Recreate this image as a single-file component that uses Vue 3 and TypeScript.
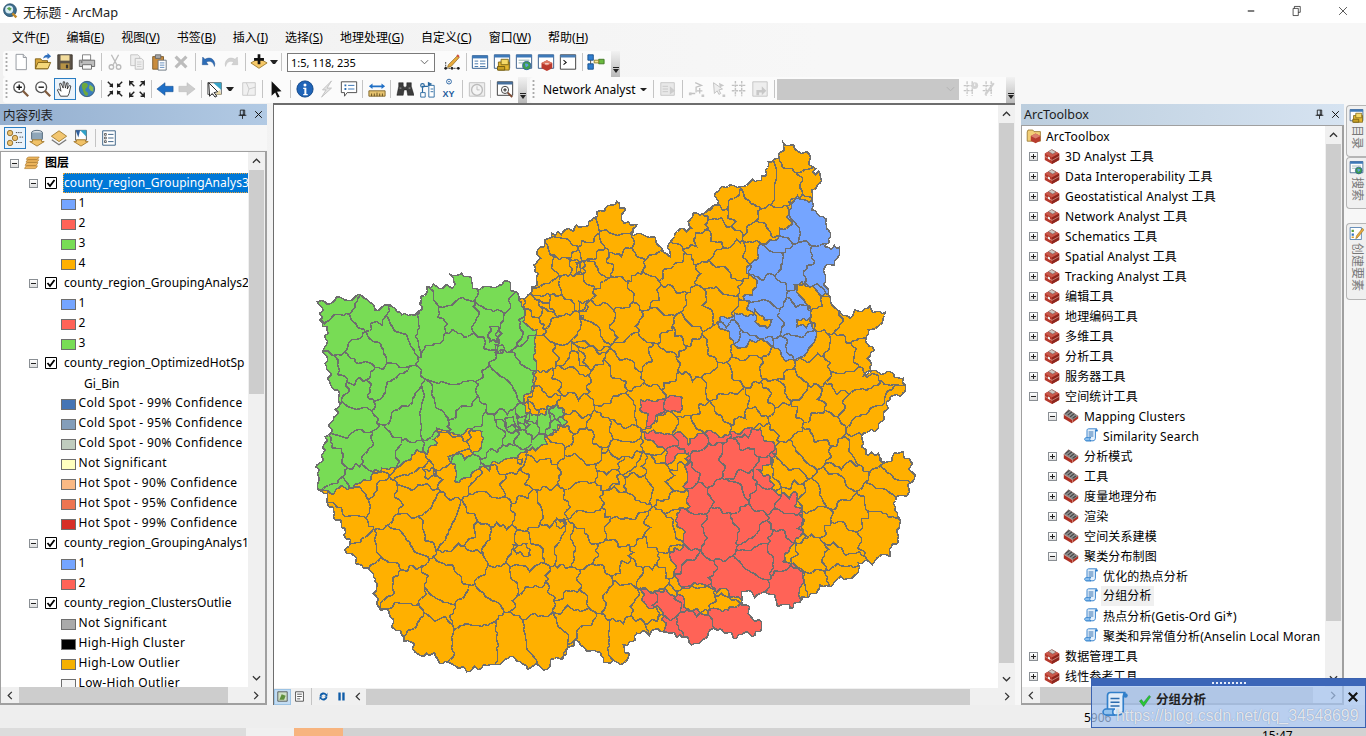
<script setup lang="ts">
type P = [number, number];
const hash = (n: number) => { const s = Math.sin(n * 127.1 + 311.7) * 43758.5453; return s - Math.floor(s); };
const conv = (ox: number, oy: number, a: number[]): P[] => { const r: P[] = []; for (let i = 0; i < a.length; i += 2) r.push([ox + a[i] / 3, oy + a[i + 1] / 3]); return r; };
const z7 = (a: number[]) => conv(310, 130, a);
const z8 = (a: number[]) => conv(620, 130, a);
const z9 = (a: number[]) => conv(310, 400, a);
const z10 = (a: number[]) => conv(620, 400, a);

function jagEdge(a: P, b: P): P[] {
  const swap = a[0] > b[0] || (a[0] === b[0] && a[1] > b[1]);
  const p = swap ? b : a; const q = swap ? a : b;
  const dx = q[0] - p[0]; const dy = q[1] - p[1]; const len = Math.hypot(dx, dy) || 1;
  const n = Math.max(1, Math.round(len / 3));
  const seed = p[0] * 13.1 + p[1] * 7.7 + q[0] * 3.3 + q[1] * 1.9;
  const w = 1 + Math.floor(hash(seed) * 3);
  const amp = Math.min(4, len / 6);
  const pts: P[] = [];
  for (let i = 0; i <= n; i++) {
    const t = i / n; const taper = Math.sin(Math.PI * t);
    const off = i === 0 || i === n ? 0 : (hash(seed + i) - 0.5) * 2.2 + taper * (Math.sin(t * Math.PI * w + seed) * amp + Math.sin(t * Math.PI * 3 * w + seed * 2) * amp * 0.35);
    const x = p[0] + dx * t - (dy / len) * off; const y = p[1] + dy * t + (dx / len) * off;
    pts.push(i === 0 || i === n ? [x, y] : [Math.round(x) + 0.5, Math.round(y) + 0.5]);
  }
  return swap ? pts.reverse() : pts;
}
function jagPath(poly: P[], close = true): string {
  let d = ''; const m = close ? poly.length : poly.length - 1;
  for (let i = 0; i < m; i++) {
    const e = jagEdge(poly[i], poly[(i + 1) % poly.length]);
    e.forEach((pt, j) => { if (j > 0 || i === 0) d += (i === 0 && j === 0 ? 'M' : 'L') + pt[0].toFixed(1) + ' ' + pt[1].toFixed(1); });
  }
  return d + (close ? 'Z' : '');
}

const ne1 = z8([490,38,535,65,560,65,578,125,600,130,600,160,575,180,575,208]);
const neBlue = z8([575,240,610,260,625,300,615,350,657,352,655,380,615,410,625,495]);
const ne3 = z8([660,545,690,565,705,540,750,528,760,548,795,547,790,565,745,600,740,640,757,650,750,710,730,738,810,725,850,745,855,785,800,815]);
const e10a = z10([790,45,770,90,730,100,725,140,745,165,775,160,785,185,850,155,885,225,865,280,830,290,825,330,835,425,770,475,715,490,700,530,625,560,600,555,590,580,545,590,545,600]);
const sRed = z10([510,625,440,580,365,575,385,640,425,675,405,705,370,700,340,715,300,685,270,690,215,735,180,705,150,700,130,695]);
const s10 = z10([100,690,50,700,45,720,10,735,25,770,10,790]);
const s9 = z9([900,790,860,755,800,720,770,750,700,810,630,785,600,770,520,795,470,815,430,795,350,760,320,760,300,725,250,685,240,650,200,605,195,545,190,520,155,495,105,450,120,430,102,405,105,385,70,350,50,300,52,280]);
const gWest = [...z9([25,270,28,235,17,200,45,150,45,110,80,45,85,0]), ...z7([60,760,45,700,45,650,50,600,30,570,35,530,22,515,70,515,80,500,105,510,155,497,185,520,195,540,225,525,245,530,275,555,335,540,335,510,350,470,370,462,425,475,435,460,418,432,455,430,505,480,520,470,570,465,590,452,625,495,625,510])];
const n7 = z7([660,490,665,470,675,470,680,440,672,405,705,330,725,310,760,305,800,285,825,290,850,265,860,245,905,225,920,213,945,240]);
const n8 = z8([5,270,50,285,30,310,70,315,120,350,150,380,165,310,215,295,205,275,220,248,240,255,260,245,300,175,330,165,405,155,440,130,445,95,475,85]);
const outline: P[] = [...ne1, ...neBlue, ...ne3, ...e10a, ...sRed, ...s10, ...s9, ...gWest, ...n7, ...n8];
const green: P[] = [...gWest, ...z7([645,540,640,575,680,600,680,720,670,735,665,770,635,820]), ...z9([665,45,740,15,772,65,730,90,690,140,650,150,600,175,555,185,500,210,460,235,435,245,435,205,415,170,430,165,480,168,515,130,515,95,380,85,378,135,305,165,300,180,215,205,160,240,120,265])];
const blue: P[] = [ne1[ne1.length - 1], ...neBlue, ...z8([595,490,545,455,525,465,570,530,575,560,530,570,530,590,575,580,590,605,525,695,455,650,440,635,390,630,355,655,330,625,290,578,345,550,400,555,370,500,410,470,405,445,380,430,415,350,450,330,470,330,480,295,515,285,505,215])];
const red: P[] = [...z10([545,600]), ...sRed, ...z10([130,640,65,600,62,565,100,580,135,565,155,585,190,590,190,620,240,640,280,625,325,630,365,605,355,590,265,560,240,550,190,565,165,530,150,455,190,440,170,340,210,320,190,260,195,200,205,160,140,195,125,140,85,120,62,93,100,90,185,100,205,135,235,100,315,105,380,85,420,85,470,155,445,195,415,210,450,230,460,270,480,285,530,280,545,350,550,390,525,425,495,460,490,485,520,490,548,520])];
const red2: P[] = z10([62,0,186,-8,185,30,140,35,100,70,80,85]);

const inside = (pt: P, poly: P[]) => { let c = false; for (let i = 0, j = poly.length - 1; i < poly.length; j = i++) { const a = poly[i]; const b = poly[j]; if ((a[1] > pt[1]) !== (b[1] > pt[1]) && pt[0] < ((b[0] - a[0]) * (pt[1] - a[1])) / (b[1] - a[1]) + a[0]) c = !c; } return c; };
const seeds: P[] = [];
let k = 0;
for (let y = 140; y < 680; y += 26) for (let x = 315 + ((y / 26) % 2) * 13; x < 920; x += 28) {
  k++; const s: P = [x + (hash(k) - 0.5) * 26, y + (hash(k + 500) - 0.5) * 24];
  const sparse = s[0] < 530 || inside(s, red) || inside(s, blue) || s[1] > 590;
  if (inside(s, outline) && hash(k + 900) > (sparse ? 0.3 : 0.14)) seeds.push(s);
}
[[575,350],[518,420],[555,418],[625,470],[578,262],[545,305]].forEach((c, i) => { for (let j = 0; j < 5; j++) { seeds.push([c[0] + (hash(i * 9 + j) - 0.5) * 24, c[1] + (hash(i * 17 + j + 40) - 0.5) * 22]); } });

function voronoiLines(): string {
  const seen = new Set<string>(); let d = '';
  seeds.forEach((s, i) => {
    let poly: P[] = [[300, 130], [930, 130], [930, 690], [300, 690]];
    seeds.forEach((o, j) => {
      if (i === j || Math.hypot(o[0] - s[0], o[1] - s[1]) > 170) return;
      const a = o[0] - s[0]; const b = o[1] - s[1]; const c = (o[0] * o[0] + o[1] * o[1] - s[0] * s[0] - s[1] * s[1]) / 2;
      const out: P[] = [];
      for (let m = 0; m < poly.length; m++) {
        const p = poly[m]; const q = poly[(m + 1) % poly.length];
        const fp = a * p[0] + b * p[1] - c; const fq = a * q[0] + b * q[1] - c;
        if (fp <= 0) out.push(p);
        if ((fp < 0 && fq > 0) || (fp > 0 && fq < 0)) { const t = fp / (fp - fq); out.push([p[0] + (q[0] - p[0]) * t, p[1] + (q[1] - p[1]) * t]); }
      }
      poly = out;
    });
    const r = poly.map((p) => [Math.round(p[0] * 10) / 10, Math.round(p[1] * 10) / 10] as P);
    r.forEach((p, m) => {
      const q = r[(m + 1) % r.length]; const key = [p.join(), q.join()].sort().join('|');
      if (seen.has(key) || (p[0] === q[0] && p[1] === q[1])) return; seen.add(key);
      d += jagPath([p, q], false);
    });
  });
  return d;
}
const extras = [z7([798,398,822,396,826,428,800,430]), z7([808,515,832,512,832,538,808,540]), z7([808,556,820,556,820,566,808,566]), z9([340,208,372,208,378,228,345,232]), z9([740,355,762,355,762,378,740,378]), z9([622,178,636,178,636,188,622,188]), z7([540,590,565,590,565,635,540,635]), z7([556,645,578,645,578,668,556,668]), z9([585,55,610,50,625,90,595,95]), z9([620,50,650,45,645,90,625,92]), z9([610,435,650,432,660,465,620,462])];
const map = {
  outline: jagPath(outline), green: jagPath(green), blue: jagPath(blue), red: jagPath(red), red2: jagPath(red2),
  hole1: jagPath(z8([405,540,455,570,440,595,405,575])),
  lines: voronoiLines() + extras.map((e) => jagPath(e)).join(''),
};

const menus = [['文件', 'F'], ['编辑', 'E'], ['视图', 'V'], ['书签', 'B'], ['插入', 'I'], ['选择', 'S'], ['地理处理', 'G'], ['自定义', 'C'], ['窗口', 'W'], ['帮助', 'H']];

const icons: Record<string, string> = {
  new: '<path d="M4.5 1.5h8l3.5 3.5v13.5H4.5z" fill="#fff" stroke="#8d9299"/><path d="M12.5 1.5v3.5H16" fill="#e6e8ea" stroke="#8d9299"/>',
  open: '<path d="M1.5 6.5h6l1.5 2h6v9h-13.5z" fill="#d9a83c" stroke="#7a5c14"/><path d="M1.5 17.5l3-7h14l-3 7z" fill="#f4d77a" stroke="#7a5c14"/><path d="M10 6c1-3 3-4 5-4V0l4 3.5-4 3.500V5c-2 0-3 0-5 1z" fill="#2f6fbd"/>',
  save: '<path d="M2 2h16v16H2z" fill="#5c5348" stroke="#3d372e"/><path d="M5 2.500h10v6H5z" fill="#f2dc9c"/><path d="M5 11.500h10V18H5z" fill="#b79345"/><path d="M11 13h2.500v4H11z" fill="#3d372e"/>',
  print: '<path d="M5 2h9v6H5z" fill="#fff" stroke="#7b7b7b"/><path d="M1.500 8h17v7h-17z" fill="#bdbdbd" stroke="#666"/><path d="M5 13h10v5H5z" fill="#f8f8f8" stroke="#666"/><path d="M3 10h2" stroke="#333"/>',
  cut: '<path d="M6 2l6 11M14 2L8 13" stroke="#bbb" stroke-width="1.500" fill="none"/><circle cx="6" cy="15.500" r="2.500" fill="none" stroke="#bbb" stroke-width="1.500"/><circle cx="14" cy="15.500" r="2.500" fill="none" stroke="#bbb" stroke-width="1.500"/>',
  copy: '<path d="M3 2h8l2 2v10H3z" fill="#eee" stroke="#c2c2c2"/><path d="M8 6h7l2 2v10H8z" fill="#f0f0f0" stroke="#bdbdbd"/><path d="M10 10h5M10 12.500h5M10 15h5" stroke="#ccc"/>',
  paste: '<path d="M3 4h12v14H3z" fill="#c98c3d" stroke="#7b5a2a"/><path d="M6 2h6v4H6z" fill="#a8a8a8" stroke="#666"/><path d="M9 8h9v11H9z" fill="#fff" stroke="#66707a"/><path d="M11 11h5M11 13.500h5M11 16h5" stroke="#5b86b8"/>',
  del: '<path d="M4 4l12 12M16 4L4 16" stroke="#bcbcbc" stroke-width="3.500"/>',
  undo: '<path d="M5.500 7c5-3 10-1 11 5l-.5 3c-1-5-5-7-9-5l2 3H2.500L3 4.500z" fill="#2c6cb7" stroke="#1d4d89" stroke-width=".5"/>',
  redo: '<path d="M14.500 7c-5-3-10-1-11 5l.5 3c1-5 5-7 9-5l-2 3h6.500L17 4.500z" fill="#d2d2d2" stroke="#bbb" stroke-width=".5"/>',
  add: '<path d="M10 6l9 5-9 6-9-6z" fill="#f6c867" stroke="#9b7a2e"/><path d="M8.500 1.500h3v4h4v3h-4v4h-3v-4h-4v-3h4z" fill="#111"/>',
  editor: '<circle cx="3" cy="17" r="1.500" fill="#111"/><circle cx="10" cy="17" r="1.500" fill="#111"/><circle cx="17" cy="17" r="1.500" fill="#111"/><path d="M3 17h14M3 10v7" stroke="#333" stroke-dasharray="2 1"/><path d="M6 13l10-10 2 2-9 10-4 1z" fill="#e8a93b" stroke="#7a5c14" stroke-width=".7"/><path d="M15 3l1.500-1.500 2 2L17 5z" fill="#cf4d3d"/>',
  table: '<path d="M1.500 3h17v14h-17z" fill="#fff" stroke="#1f4f87"/><path d="M1.500 3h17v3h-17z" fill="#3c78b8"/><path d="M4 9h4M10 9h6M4 12h4M10 12h6M4 15h4M10 15h6" stroke="#3a6ea5"/>',
  catalog: '<path d="M1.500 2h17v15h-17z" fill="#fff" stroke="#2b5282"/><path d="M1.500 2h17v3h-17z" fill="#3c78b8"/><path d="M6 10h12v9H6z" fill="#e3b62f" stroke="#7b6415"/><path d="M9 7h8v6H9z" fill="#f5d968" stroke="#7b6415"/><path d="M5 15h8v4H5z" fill="#c9a024" stroke="#6e5a12"/>',
  search: '<path d="M1.500 2h17v15h-17z" fill="#fff" stroke="#2b5282"/><path d="M1.500 2h17v3h-17z" fill="#3c78b8"/><path d="M4 8h12M4 11h6" stroke="#8aa"/><circle cx="13" cy="14" r="4.500" fill="#3f9e49" stroke="#2a5e9b"/><path d="M11 12c2-1 4 0 4 2l-3 2z" fill="#5d9ee0"/>',
  boxwin: '<path d="M1.500 2h17v15h-17z" fill="#fff" stroke="#2b5282"/><path d="M1.500 2h17v3h-17z" fill="#3c78b8"/><path d="M5 11l6-3 6 3v6l-6 3-6-3z" fill="#bb3a2e"/><path d="M5 11l6-3 6 3-6 3z" fill="#de7b66"/><path d="M9 12h4" stroke="#fff"/>',
  cmd: '<path d="M1.500 2h17v16h-17z" fill="#fff" stroke="#333"/><path d="M1.500 2h17v3h-17z" fill="#4a7eb5"/><path d="M5 8l3 2.500L5 13" fill="none" stroke="#111" stroke-width="1.200"/>',
  model: '<path d="M1 2h6v6H1zM1 12h6v6H1z" fill="#2f7ed0" stroke="#174f8a"/><path d="M13 7h6v5h-6z" fill="#69b93f" stroke="#3f7622"/><path d="M8 8h5v3H8z" fill="#f5e89a" stroke="#8c7a26"/><path d="M4 8v4" stroke="#444"/>',
  zin: '<circle cx="8" cy="8" r="6" fill="#fff" stroke="#555" stroke-width="1.500"/><path d="M5 8h6M8 5v6" stroke="#111" stroke-width="1.500"/><path d="M12 12l6 6" stroke="#7f5a3c" stroke-width="2.500"/>',
  zout: '<circle cx="8" cy="8" r="6" fill="#fff" stroke="#555" stroke-width="1.500"/><path d="M5 8h6" stroke="#111" stroke-width="1.500"/><path d="M12 12l6 6" stroke="#7f5a3c" stroke-width="2.500"/>',
  pan: '<path d="M5 18l-3.500-7 1.500-1 2.500 2.500L4 4l1.500-.5L8 9V2h1.500l1 7 1.500-6 1.500.5-1 6.500 2.500-4 1.500.7-2 8.300-1.500 3z" fill="#fff" stroke="#222" stroke-width=".9"/>',
  globe: '<circle cx="10" cy="10" r="8.500" fill="#3b7fbe" stroke="#365a78"/><path d="M5 4c3-2 6 0 6 2s-3 3-3 5 4 2 3 5-4 1-5-3-3-6-1-9z" fill="#6ea93d"/><path d="M13 5l4 3 0 5-3-1-2-3z" fill="#8cbd4d"/>',
  fixin: '<path d="M2 2l5 5V4M7 7H4M18 2l-5 5V4M13 7h3M2 18l5-5v3M7 13H4M18 18l-5-5v3M13 13h3" fill="none" stroke="#222" stroke-width="1.600"/>',
  fixout: '<path d="M7 7L2 2v4M2 2h4M13 7l5-5v4M18 2h-4M7 13l-5 5v-4M2 18h4M13 13l5 5v-4M18 18h-4" fill="none" stroke="#222" stroke-width="1.600"/>',
  back: '<path d="M1 10l9-7v4h9v6h-9v4z" fill="#1f6fc6" stroke="#124a8b" stroke-width=".6"/>',
  fwd: '<path d="M19 10l-9-7v4H1v6h9v4z" fill="#cdcdcd" stroke="#bbb" stroke-width=".6"/>',
  selmap: '<path d="M2 3h15v13H2z" fill="#fff" stroke="#555"/><path d="M8 3l9 0v8z" fill="#38a3c7"/><path d="M10 16l5-5 2 5z" fill="#e6d6a2"/><path d="M3 3l1 15 3-3 3 4 2-1-3-4 4-1z" fill="#fff" stroke="#111"/>',
  clear: '<path d="M3 3h14v14H3z" fill="#f0f0f0" stroke="#c8c8c8"/><path d="M7 3l3 7 7-2M10 10l-2 7" fill="none" stroke="#c8c8c8"/>',
  arrow: '<path d="M4 1.500l11 11-5 .5 3 5.500-2.500 1L8 14l-4 3.500z" fill="#111"/>',
  info: '<circle cx="10" cy="10" r="9" fill="#1f64b8" stroke="#0e4484"/><circle cx="10" cy="5.500" r="1.700" fill="#fff"/><path d="M8 8.500h3.500v7H13V17H8v-1.500h1.300V10H8z" fill="#fff"/>',
  flash: '<path d="M15 1L5 11h4l-5 8 11-10h-5l5-8z" fill="#e4e4e4" stroke="#c0c0c0"/>',
  popup: '<path d="M1.500 2h17v12H8l-3 4v-4H1.500z" fill="#fff" stroke="#444"/><path d="M5 5h2v2H5zM5 9h2v2H5z" fill="#2b6cb0"/><path d="M9 6h7M9 10h7" stroke="#2b6cb0"/>',
  measure: '<path d="M1 12h18v6H1z" fill="#e7c470" stroke="#7d6328"/><path d="M4 15v3M7 15v3M10 14v4M13 15v3M16 15v3" stroke="#5e4a1c"/><path d="M1 7l4-3v2h10V4l4 3-4 3V8H5v2z" fill="#1f6fc6"/>',
  binoc: '<path d="M3 3h5v3l1 2h2l1-2V3h5v4l3 10h-7l-1-6H9l-1 6H1l2-10z" fill="#3d3d3d" stroke="#111" stroke-width=".5"/><path d="M4 9h2M14 9h2" stroke="#aaa"/>',
  route: '<path d="M3 14h5v5H3zM12 6h6v13h-6z" fill="#fff" stroke="#28689f"/><path d="M5 14V7h6M3 6a2 2 0 104 0 2 2 0 10-4 0" fill="none" stroke="#28689f" stroke-width="1.300"/><path d="M11 2l5 2.500L11 7z" fill="#28689f"/><path d="M14 10h3M14 13h3" stroke="#28689f"/>',
  xy: '<circle cx="10" cy="6" r="4" fill="#fff" stroke="#1f5c9e" stroke-width="1.500"/><circle cx="10" cy="6" r="1.300" fill="#1f5c9e"/>',
  time: '<path d="M1.500 3h17v15h-17z" fill="#eee" stroke="#c0c0c0"/><circle cx="10" cy="11" r="6" fill="#f5f5f5" stroke="#bbb" stroke-width="1.500"/><path d="M10 7v4h3" stroke="#bbb" fill="none"/>',
  viewer: '<path d="M1.500 2h17v15h-17z" fill="#fff" stroke="#333"/><path d="M1.500 2h17v3h-17z" fill="#456f9c"/><circle cx="10" cy="11" r="4" fill="#fff" stroke="#333"/><path d="M8 11h4M10 9v4" stroke="#111"/><path d="M13 14l5 5" stroke="#7f4a33" stroke-width="2.200"/>',
  na1: '<path d="M2 3h15v14H2z" fill="#e8e8e8" stroke="#c6c6c6"/><path d="M4 7h6M4 10h6M4 13h6" stroke="#c6c6c6"/><path d="M12 7l6 5-6 4z" fill="#ccc"/>',
  na2: '<path d="M8 3l7 3-6 2v6M2 15h6M10 12h6M13 9v6" fill="none" stroke="#c2c2c2" stroke-width="1.400"/><path d="M1 14h3v3H1zM15 16h3v3h-3z" fill="#c8c8c8"/>',
  na3: '<path d="M5 3l1 12 3-3 2 4 2-1-2-4 4-1z" fill="#eee" stroke="#c0c0c0"/><path d="M11 3l6 3-5 2zM15 16h3v3h-3z" fill="#c8c8c8"/>',
  na4: '<path d="M2 6h16M2 12h16M6 1v17M13 1v17" stroke="#c2c2c2" stroke-width="1.600" fill="none" stroke-dasharray="3 1"/>',
  na5: '<path d="M2 2h16v16H2z" fill="#eee" stroke="#c4c4c4"/><path d="M6 17v-6h6V7l5 5-5 5v-3H9v3z" fill="#c8c8c8"/>',
  na6: '<path d="M2 6h12M2 12h12M6 1v17M12 1v17" stroke="#c6c6c6" stroke-width="1.500" stroke-dasharray="3 1"/><circle cx="15" cy="6" r="4" fill="#d4d4d4"/><path d="M14.500 3.500h1v3h-1z" fill="#fff"/>',
  na7: '<path d="M2 6h12M2 12h12M6 1v17M12 1v17" stroke="#c6c6c6" stroke-width="1.500" stroke-dasharray="3 1"/><path d="M15 3l-10 14" stroke="#cfcfcf" stroke-width="2.500"/>',
  tocA: '<circle cx="4.500" cy="4.500" r="3" fill="#ecc16e" stroke="#8d6c2a"/><circle cx="10" cy="10" r="3" fill="#ecc16e" stroke="#8d6c2a"/><circle cx="4.500" cy="15.500" r="3" fill="#ecc16e" stroke="#8d6c2a"/><path d="M11 4h7M15 9h4M11 15h7" stroke="#333" stroke-dasharray="1.500 1"/>',
  tocB: '<ellipse cx="10" cy="4" rx="6" ry="2.500" fill="#dbe2e8" stroke="#4e6375"/><path d="M4 4v7c0 3 12 3 12 0V4" fill="#8fa6b8" stroke="#4e6375"/><path d="M5 12h10v2h3l-8 5-8-5h3z" fill="#f1c268" stroke="#a3782b"/>',
  tocC: '<path d="M10 2l8.500 6-8.500 6-8.500-6z" fill="#f2c670" stroke="#a17c30"/><path d="M2 12l8 5.500 8-5.500" fill="none" stroke="#7a7a7a" stroke-width="1.500"/>',
  tocD: '<path d="M4 1.500h12v11H4z" fill="#fff" stroke="#555"/><path d="M9 1.500h7v7z" fill="#30a2c8"/><path d="M4 1.500l5 0-2 8z" fill="#2f5f9d"/><path d="M5 12h10v2h3l-8 5-8-5h3z" fill="#f1c268" stroke="#a3782b"/>',
  tocE: '<path d="M3 2h14v16H3z" fill="#fff" stroke="#31597f"/><path d="M5 5h2v2H5zM5 9h2v2H5zM5 13h2v2H5z" fill="none" stroke="#333" stroke-width=".8"/><path d="M9 6h6M9 10h6M9 14h6" stroke="#31597f"/>',
  layers: '<path d="M3 5.500q.5-2.500 3-3h13q-1 2.500-3 3zM2.500 9q.5-2.500 3-3h13q-1 2.500-3 3zM1.500 13q.5-3 3-3.500h13q-1 3-3 3.500zM.8 17q.5-3 3-3.500h13q-1 3-3 3.500z" fill="#f0b860" stroke="#a87425" stroke-width=".8"/>',
  pin: '<path d="M6 2h8v9H6z" fill="none" stroke="#111" stroke-width="1.500"/><path d="M11.500 2v9" stroke="#111" stroke-width="1.500"/><path d="M3 11.500h14M10 12v6" stroke="#111" stroke-width="1.500"/>',
  close: '<path d="M4 4l12 12M16 4L4 16" stroke="#111" stroke-width="1.800"/>',
  folderbox: '<path d="M1.500 5l1-2.500h6l1.500 2h8v12h-16.500z" fill="#f2cf77" stroke="#94722b"/><path d="M6 10l6-3 6 3v6l-6 3-6-3z" fill="#b73c2e"/><path d="M6 10l6-3 6 3-6 3z" fill="#db7f6c"/>',
  box: '<path d="M1 7l9-5 9 5v8l-9 5-9-5z" fill="#b5382b"/><path d="M1 7l9-5 9 5-9 5z" fill="#c9584a"/><path d="M10 12l9-5v8l-9 5z" fill="#8f271e"/><path d="M5.500 4.500L9.500 2l5.500 3-4 2.500z" fill="#cfc9c5" stroke="#6e5d58" stroke-width=".6"/><path d="M1 10.500l9 5 9-5" fill="none" stroke="#e8b6a8" stroke-width=".8"/><path d="M5 10.500l2.500 1.300v3L5 13.500z" fill="#f2f2f2"/>',
  set: '<path d="M1 8l6-6 12 8v3l-8 6-10-6z" fill="#ad2f23"/><path d="M1 8l6-6 12 8-7 5z" fill="#8c8c8c"/><path d="M3 7l5-4M6 9l5-4M9 11l5-4M12 13l4-3" stroke="#3f3f3f" stroke-width="1.300"/><path d="M1 8l11 7v4" fill="none" stroke="#e1bdb2" stroke-width=".7"/>',
  script: '<path d="M5 3c0-1.500 1-2 2-2h10c-1 .5-1.500 1.500-1.500 2.500V13c0 1-1 3-3 3H4c1.500-.5 1-3 1-4z" fill="#e6f1fc" stroke="#2478c8" stroke-width="1.100"/><path d="M7 5h6M7 7.500h6M7 10h6" stroke="#1c62a8" stroke-width="1.100"/><path d="M2 14c0-1 1-2 2-2h6c-1 0-1.500 1-1.500 2s.5 2 1.500 2H4c-1 0-2-1-2-2z" fill="#8fc2f0" stroke="#2478c8"/><circle cx="17" cy="3" r="1.500" fill="#2478c8"/>',
  check: '<path d="M2 10l3-2 3 4 8-10 2 2L8 18z" fill="#28c834" stroke="#156e1f" stroke-width=".6"/>',
  mn: '<path d="M5 10h10" stroke="#000" stroke-width="1.600"/>',
  rst: '<path d="M6 6V3h9v9h-3M4 6h8v11H4z" fill="none" stroke="#000"/>',
  cls: '<path d="M4 4l12 12M16 4L4 16" stroke="#000"/>',
};

type T = { i?: string; s?: boolean; c?: boolean };
const i = (n: string): T => ({ i: n }); const S: T = { s: true }; const C: T = { c: true };
const bar1a: T[] = [i('new'), i('open'), i('save'), i('print'), S, i('cut'), i('copy'), i('paste'), i('del'), S, i('undo'), i('redo'), S, i('add'), C, S];
const bar1b: T[] = [i('editor'), S, i('table'), i('catalog'), i('search'), i('boxwin'), i('cmd'), S, i('model')];
const bar2a: T[] = [i('zin'), i('zout'), i('pan'), i('globe'), S, i('fixin'), i('fixout'), S, i('back'), i('fwd'), S, i('selmap'), C, i('clear'), S, i('arrow'), S, i('info'), i('flash'), i('popup'), S, i('measure'), S, i('binoc'), i('route'), i('xy'), S, i('time'), S, i('viewer')];
const bar2b: T[] = [S, i('na1'), S, i('na2'), i('na3'), i('na4'), i('na5'), S];

const sw = { b: '#75a5ff', r: '#ff6357', g: '#78dc55', o: '#ffb000' };
type Row = { head?: string; sel?: boolean; sub?: string; c?: string; t?: string };
const toc: Row[] = [
  { head: 'county_region_GroupingAnalys3', sel: true }, { c: sw.b, t: '1' }, { c: sw.r, t: '2' }, { c: sw.g, t: '3' }, { c: sw.o, t: '4' },
  { head: 'county_region_GroupingAnalys2' }, { c: sw.b, t: '1' }, { c: sw.r, t: '2' }, { c: sw.g, t: '3' },
  { head: 'county_region_OptimizedHotSp' }, { sub: 'Gi_Bin' },
  { c: '#4575b5', t: 'Cold Spot - 99% Confidence' }, { c: '#849eba', t: 'Cold Spot - 95% Confidence' }, { c: '#c0ccbe', t: 'Cold Spot - 90% Confidence' }, { c: '#ffffbf', t: 'Not Significant' }, { c: '#fab984', t: 'Hot Spot - 90% Confidence' }, { c: '#ed7551', t: 'Hot Spot - 95% Confidence' }, { c: '#d62f27', t: 'Hot Spot - 99% Confidence' },
  { head: 'county_region_GroupingAnalys1' }, { c: sw.b, t: '1' }, { c: sw.r, t: '2' },
  { head: 'county_region_ClustersOutlie' }, { c: '#aaaaaa', t: 'Not Significant' }, { c: '#000000', t: 'High-High Cluster' }, { c: '#f5b000', t: 'High-Low Outlier' }, { c: '#f5f5f5', t: 'Low-High Outlier' },
];
type Tb = { lv: number; t: string; ic: string; box?: string; hl?: boolean };
const tb = (t: string, box = '+'): Tb => ({ lv: 0, t, ic: 'box', box });
const ts = (t: string, box = '+'): Tb => ({ lv: 1, t, ic: 'set', box });
const sc = (t: string, hl = false): Tb => ({ lv: 2, t, ic: 'script', hl });
const tools: Tb[] = [
  tb('3D Analyst 工具'), tb('Data Interoperability 工具'), tb('Geostatistical Analyst 工具'), tb('Network Analyst 工具'), tb('Schematics 工具'), tb('Spatial Analyst 工具'), tb('Tracking Analyst 工具'), tb('编辑工具'), tb('地理编码工具'), tb('多维工具'), tb('分析工具'), tb('服务器工具'), tb('空间统计工具', '-'),
  ts('Mapping Clusters', '-'), sc('Similarity Search'), ts('分析模式'), ts('工具'), ts('度量地理分布'), ts('渲染'), ts('空间关系建模'), ts('聚类分布制图', '-'),
  sc('优化的热点分析'), sc('分组分析', true), sc('热点分析(Getis-Ord Gi*)'), sc('聚类和异常值分析(Anselin Local Moran'), tb('数据管理工具'), tb('线性参考工具'),
];
</script>

<template>
  <div class="app">
    <header class="titlebar">
      <svg class="appicon" viewBox="0 0 20 20"><circle cx="10" cy="9" r="8" fill="#3d6d8d" stroke="#234a66"/><circle cx="9" cy="8" r="5" fill="#d8ecf4"/><path d="M6 7l3-2 3 2-2 3z" fill="#5aa34a"/><path d="M13 13l5 5" stroke="#c28a2c" stroke-width="3"/></svg>
      <span class="apptitle">无标题 - ArcMap</span>
      <div class="winbtns">
        <svg class="winbtn" viewBox="0 0 20 20" v-html="icons.mn"></svg>
        <svg class="winbtn" viewBox="0 0 20 20" v-html="icons.rst"></svg>
        <svg class="winbtn" viewBox="0 0 20 20" v-html="icons.cls"></svg>
      </div>
    </header>
    <nav class="menubar">
      <span v-for="m in menus" :key="m[1]" class="menu">{{ m[0] }}(<u>{{ m[1] }}</u>)</span>
    </nav>

    <div class="toolrow r1">
      <div class="bar bar1">
        <span class="grip"></span>
        <template v-for="(b, n) in bar1a" :key="n">
          <svg v-if="b.i" class="ti" viewBox="0 0 20 20" v-html="icons[b.i]"></svg>
          <span v-else-if="b.s" class="sep"></span>
          <span v-else class="caret"></span>
        </template>
        <div class="scale"><span>1:5, 118, 235</span><svg viewBox="0 0 10 6" class="chev"><path d="M1 1l4 4 4-4" fill="none" stroke="#555"/></svg></div>
        <span class="sep s2"></span>
        <template v-for="(b, n) in bar1b" :key="n">
          <svg v-if="b.i" class="ti" viewBox="0 0 20 20" v-html="icons[b.i]"></svg>
          <span v-else class="sep"></span>
        </template>
        <span class="endgrip"><i></i></span>
      </div>
    </div>
    <div class="toolrow r2">
      <div class="bar bar2a">
        <span class="grip"></span>
        <template v-for="(b, n) in bar2a" :key="n">
          <span v-if="b.i === 'pan'" class="tiActive"><svg class="ti" viewBox="0 0 20 20" v-html="icons.pan"></svg></span>
          <span v-else-if="b.i === 'xy'" class="xy"><svg viewBox="0 0 20 20" v-html="icons.xy"></svg><b>XY</b></span>
          <svg v-else-if="b.i" class="ti" viewBox="0 0 20 20" v-html="icons[b.i]"></svg>
          <span v-else-if="b.s" class="sep"></span>
          <span v-else class="caret"></span>
        </template>
        <span class="endgrip"><i></i></span>
      </div>
      <div class="bar bar2b">
        <span class="grip"></span>
        <span class="na">Network Analyst</span>
        <span class="caret tiny"></span>
        <template v-for="(b, n) in bar2b" :key="n">
          <svg v-if="b.i" class="ti" viewBox="0 0 20 20" v-html="icons[b.i]"></svg>
          <span v-else class="sep"></span>
        </template>
        <div class="combo"><svg viewBox="0 0 10 6" class="chev"><path d="M1 1l4 4 4-4" fill="none" stroke="#b0b0b0"/></svg></div>
        <svg class="ti nar first" viewBox="0 0 20 20" v-html="icons.na6"></svg>
        <svg class="ti nar" viewBox="0 0 20 20" v-html="icons.na7"></svg>
        <span class="endgrip"><i></i></span>
      </div>
    </div>

    <main class="work">
      <section class="toc">
        <div class="ptitle tocT"><span>内容列表</span><svg viewBox="0 0 20 20" v-html="icons.pin"></svg><svg viewBox="0 0 20 20" v-html="icons.close"></svg></div>
        <div class="tocbar">
          <span class="tiActive small"><svg class="ti" viewBox="0 0 20 20" v-html="icons.tocA"></svg></span>
          <svg class="ti" viewBox="0 0 20 20" v-html="icons.tocB"></svg>
          <svg class="ti" viewBox="0 0 20 20" v-html="icons.tocC"></svg>
          <svg class="ti" viewBox="0 0 20 20" v-html="icons.tocD"></svg>
          <span class="sep"></span>
          <svg class="ti" viewBox="0 0 20 20" v-html="icons.tocE"></svg>
        </div>
        <div class="frame tocframe">
          <div class="treewrap">
            <div class="tree toctree">
              <div class="row rootrow">
                <span class="exp e1"></span>
                <svg class="rowic" viewBox="0 0 20 20" v-html="icons.layers"></svg>
                <b>图层</b>
              </div>
              <template v-for="(r, n) in toc" :key="n">
                <div v-if="r.head" class="row head">
                  <span class="exp"></span>
                  <svg class="cb" viewBox="0 0 12 12"><path d="M.5.5h11v11H.5z" fill="#fff" stroke="#000"/><path d="M2.500 6l2.500 3 4.500-6" fill="none" stroke="#000" stroke-width="1.800"/></svg>
                  <span class="lbl" :class="{ selected: r.sel }">{{ r.head }}</span>
                </div>
                <div v-else-if="r.sub" class="row subhd">{{ r.sub }}</div>
                <div v-else class="row leg"><i class="sw" :style="{ background: r.c }"></i><span>{{ r.t }}</span></div>
              </template>
            </div>
            <div class="vbar">
              <svg class="arr" viewBox="0 0 10 6"><path d="M1 5l4-4 4 4" fill="none" stroke="#333" stroke-width="1.400"/></svg>
              <div class="vtrack"><div class="thumb tocv"></div></div>
              <svg class="arr" viewBox="0 0 10 6"><path d="M1 1l4 4 4-4" fill="none" stroke="#333" stroke-width="1.400"/></svg>
            </div>
          </div>
          <div class="hbar">
            <svg class="arrh" viewBox="0 0 6 10"><path d="M5 1L1 5l4 4" fill="none" stroke="#333" stroke-width="1.400"/></svg>
            <div class="htrack"><div class="thumbh toch"></div></div>
            <svg class="arrh" viewBox="0 0 6 10"><path d="M1 1l4 4-4 4" fill="none" stroke="#333" stroke-width="1.400"/></svg>
          </div>
        </div>
      </section>

      <section class="mapp">
        <div class="mapinner">
          <svg class="mapsvg" viewBox="274 105 724 583" shape-rendering="crispEdges">
            <defs><clipPath id="mclip"><path :d="map.outline"/></clipPath></defs>
            <path :d="map.outline" fill="#ffb000"/>
            <path :d="map.green" fill="#78dc55"/>
            <path :d="map.blue" fill="#75a5ff"/>
            <path :d="map.red" fill="#ff6357"/>
            <path :d="map.red2" fill="#ff6357"/>
            <path :d="map.hole1" fill="#ffb000"/>
            <path :d="map.lines" fill="none" stroke="#6e6e6e" stroke-width="1.600" clip-path="url(#mclip)"/>
            <path :d="map.green + map.blue + map.red + map.red2 + map.hole1" fill="none" stroke="#6e6e6e" stroke-width="1.600" clip-path="url(#mclip)"/>
            <path :d="map.outline" fill="none" stroke="#6e6e6e" stroke-width="1.600"/>
          </svg>
          <div class="vbar mapv">
            <svg class="arr" viewBox="0 0 10 6"><path d="M1 5l4-4 4 4" fill="none" stroke="#333" stroke-width="1.400"/></svg>
            <div class="vtrack"><div class="thumb mapthumb"></div></div>
            <svg class="arr" viewBox="0 0 10 6"><path d="M1 1l4 4 4-4" fill="none" stroke="#333" stroke-width="1.400"/></svg>
          </div>
        </div>
        <div class="mapbottom">
          <span class="mb active"><svg viewBox="0 0 14 14"><path d="M1 1h12v12H1z" fill="#cfe0c6" stroke="#444"/><path d="M3 11l3-7 5 2-2 5z" fill="#5f8f3c"/></svg></span>
          <span class="mb"><svg viewBox="0 0 14 14"><path d="M2 1h10v12H2z" fill="#fff" stroke="#333"/><path d="M4 4h6M4 7h6M4 10h4" stroke="#333"/></svg></span>
          <span class="sep"></span>
          <span class="mb"><svg viewBox="0 0 14 14"><path d="M2 6a5 5 0 019-2l1-2v5H8l2-1.500A3.500 3.500 0 004 7zM12 8a5 5 0 01-9 2l-1 2V7h4L4 8.500A3.500 3.500 0 0010 7z" fill="#0f5ca8"/></svg></span>
          <span class="mb"><svg viewBox="0 0 14 14"><path d="M3 2h3v10H3zM8 2h3v10H8z" fill="#0f5ca8"/></svg></span>
          <svg class="arrh" viewBox="0 0 6 10"><path d="M5 1L1 5l4 4" fill="none" stroke="#333" stroke-width="1.400"/></svg>
          <div class="htrack"><div class="thumbh mapth"></div></div>
          <svg class="arrh" viewBox="0 0 6 10"><path d="M1 1l4 4-4 4" fill="none" stroke="#333" stroke-width="1.400"/></svg>
        </div>
      </section>

      <section class="toolbox">
        <div class="ptitle tbT"><span>ArcToolbox</span><svg viewBox="0 0 20 20" v-html="icons.pin"></svg><svg viewBox="0 0 20 20" v-html="icons.close"></svg></div>
        <div class="frame tbframe">
          <div class="treewrap">
            <div class="tree tbtree">
              <div class="row tbrow root"><svg class="rowic" viewBox="0 0 20 20" v-html="icons.folderbox"></svg><span>ArcToolbox</span></div>
              <div v-for="(r, n) in tools" :key="n" class="row tbrow" :class="'lv' + r.lv">
                <span v-if="r.box" class="exp" :class="{ plus: r.box === '+' }"></span>
                <svg class="rowic" viewBox="0 0 20 20" v-html="icons[r.ic]"></svg>
                <span :class="{ hl: r.hl }">{{ r.t }}</span>
              </div>
            </div>
            <div class="vbar">
              <svg class="arr" viewBox="0 0 10 6"><path d="M1 5l4-4 4 4" fill="none" stroke="#333" stroke-width="1.400"/></svg>
              <div class="vtrack"><div class="thumb tbv"></div></div>
              <svg class="arr" viewBox="0 0 10 6"><path d="M1 1l4 4 4-4" fill="none" stroke="#333" stroke-width="1.400"/></svg>
            </div>
          </div>
          <div class="hbar">
            <svg class="arrh" viewBox="0 0 6 10"><path d="M5 1L1 5l4 4" fill="none" stroke="#333" stroke-width="1.400"/></svg>
            <div class="htrack"><div class="thumbh tbh"></div></div>
            <svg class="arrh" viewBox="0 0 6 10"><path d="M1 1l4 4-4 4" fill="none" stroke="#333" stroke-width="1.400"/></svg>
          </div>
        </div>
      </section>

      <aside class="dock">
        <div class="dtab t1"><svg viewBox="0 0 20 20" v-html="icons.catalog"></svg><span>目录</span></div>
        <div class="dtab t2"><svg viewBox="0 0 20 20" v-html="icons.search"></svg><span>搜索</span></div>
        <div class="dtab t3"><svg viewBox="0 0 20 20"><path d="M1.500 2h15v16h-15z" fill="#fff" stroke="#3a6ea5"/><path d="M3.500 5h3v3h-3z" fill="#5a9e3d"/><path d="M3.500 10h3v3h-3z" fill="#2e74c4"/><path d="M3.500 14h3v2h-3z" fill="#d9a032"/><path d="M9 17l1-4 8-10 2 2-8 10z" fill="#e8a93b" stroke="#7a5c14" stroke-width=".6"/></svg><span>创建要素</span></div>
      </aside>
    </main>

    <footer class="status"><span>5906</span></footer>
    <div class="taskbar"><i class="tk a"></i><i class="tk b"></i><i class="tk c"></i><i class="tk d"></i><span class="clock">15:47</span></div>

    <div class="popup">
      <div class="ptop"><i v-for="n in 9" :key="n"></i></div>
      <div class="pbody">
        <svg class="pscroll" viewBox="0 0 20 20" v-html="icons.script"></svg>
        <svg class="pcheck" viewBox="0 0 20 20" v-html="icons.check"></svg>
        <b>分组分析</b>
        <svg class="pclose" viewBox="0 0 20 20"><path d="M4 4l12 12M16 4L4 16" stroke="#111" stroke-width="3"/></svg>
      </div>
      <span class="wm">https://blog.csdn.net/qq_34548699</span>
    </div>
  </div>
</template>

<style scoped>
.app { width: 1366px; height: 736px; overflow: hidden; position: relative; display: flex; flex-direction: column; background: linear-gradient(90deg, #f0f0f0, #f7f7f7 60%); font-family: "Noto Sans", "Noto Sans CJK SC", sans-serif; font-size: 12px; color: #000; }
svg { display: block; flex: none; }
.titlebar { height: 23px; flex: none; background: #fff; display: flex; align-items: center; padding: 0 0 1px 2px; box-sizing: border-box; }
.appicon { width: 16px; height: 16px; margin-right: 5px; }
.apptitle { font-size: 12.8px; color: #222; }
.winbtns { margin-left: auto; display: flex; padding-right: 18px; gap: 36px; }
.winbtn { width: 10px; height: 10px; transform: scale(1.300); }
.menubar { height: 24px; flex: none; display: flex; align-items: center; gap: 17px; padding: 4px 0 0 12px; box-sizing: border-box; }
.menu { white-space: nowrap; font-size: 12px; }
.toolrow { display: flex; height: 26px; flex: none; padding-left: 3px; }
.r1 { margin-top: 4px; }
.bar { display: flex; align-items: center; background: #fbfbfb; height: 26px; box-sizing: border-box; border-radius: 3px 0 0 3px; position: relative; }
.r1 .bar { padding-bottom: 4px; }
.r2 .bar { padding-bottom: 2px; }
.grip { width: 7px; flex: none; height: 18px; background-image: radial-gradient(circle, #aaa 1px, transparent 1.200px); background-size: 3px 4px; background-position: center; background-repeat: repeat-y; }
.bar1 { width: 617px; }
.bar2a { width: 524px; }
.bar2b { width: 485px; margin-left: 3px; }
.ti { width: 18px; height: 18px; margin: 0 2px; }
.sep { width: 1px; height: 18px; background: #c4c4c4; margin: 0 2.500px; flex: none; }
.s2 { margin: 0 2px; visibility: hidden; }
.caret { width: 8px; flex: none; height: 0; border-top: 4px solid #222; border-left: 3.500px solid transparent; border-right: 3.500px solid transparent; box-sizing: border-box; }
.bar2a .caret { margin-right: 3.500px; }
.bar2b .ti { margin: 0 1.500px; }
.bar2b .sep { margin: 0 3.500px; }
.bar2b .caret.tiny { width: 7px; margin-left: 4px; margin-right: 3px; border-top-width: 3px; border-left-width: 3px; border-right-width: 3px; }
.scale { width: 148px; height: 19px; box-sizing: border-box; border: 1px solid #7a7a7a; background: #fff; display: flex; align-items: center; justify-content: space-between; padding: 0 5px 0 3px; margin-left: 3px; margin-right: 1px; font-size: 11px; letter-spacing: 0; }
.chev { width: 9px; height: 6px; }
.endgrip { margin-left: auto; width: 9px; height: 26px; background: linear-gradient(#f2f2f2, #b9b9b9); position: relative; flex: none; align-self: flex-start; }
.endgrip i { position: absolute; left: 2px; bottom: 4px; width: 0; height: 0; border-top: 4px solid #222; border-left: 3px solid transparent; border-right: 3px solid transparent; }
.endgrip i::before { content: ""; position: absolute; left: -3px; top: -6px; width: 6px; height: 1px; background: #222; }
.tiActive { width: 22px; height: 22px; box-sizing: border-box; border: 1px solid #2a7dc2; background: #eaf3fb; display: flex; align-items: center; justify-content: center; flex: none; }
.tiActive .ti { margin: 0; }
.xy { width: 22px; height: 22px; display: flex; flex-direction: column; align-items: center; flex: none; color: #1f5c9e; font: 700 9px/9px "Liberation Sans", sans-serif; }
.xy svg { width: 12px; height: 12px; }
.na { margin-left: 6px; font-size: 12px; white-space: nowrap; }
.combo { width: 182px; height: 21px; background: #c8c8c8; flex: none; margin-left: -2px; display: flex; align-items: center; justify-content: flex-end; padding-right: 4px; box-sizing: border-box; }
.bar2b .nar { width: 17px; margin: 0 1px; }
.bar2b .nar.first { margin-left: 3px; }
.work { flex: none; height: 602px; margin-top: 0; display: flex; }
.toc { width: 267px; flex: none; display: flex; flex-direction: column; padding-top: 1px; box-sizing: border-box; }
.ptitle { height: 21px; flex: none; display: flex; align-items: center; padding: 0 1px 0 3px; font-size: 12.500px; color: #1c1c1c; }
.ptitle span { flex: 1; }
.ptitle svg { width: 11px; height: 11px; margin-left: 3px; margin-right: 2px; }
.tocT { background: linear-gradient(90deg, #94afcf, #b2cae4); }
.tbT { background: linear-gradient(90deg, #bccede, #d6e3f1); }
.tocbar { height: 25px; flex: none; background: #f7f7f7; display: flex; align-items: center; padding-left: 4px; box-sizing: border-box; }
.small { width: 22px; height: 22px; }
.frame { flex: 1; min-height: 0; border: 1px solid #a0a0a0; border-width: 1px 2px 2px 1px; display: flex; flex-direction: column; background: #f0f0f0; margin-top: 1px; }
.treewrap { flex: 1; min-height: 0; display: flex; }
.tree { flex: 1; min-width: 0; background: #fff; overflow: hidden; }
.toctree { padding-top: 1px; }
.vbar { width: 15px; flex: none; display: flex; flex-direction: column; background: #f0f0f0; padding: 0 1px; box-sizing: content-box; }
.arr { width: 9px; height: 6px; margin: 6px auto; flex: none; }
.vtrack { flex: 1; min-height: 0; }
.thumb { background: #cdcdcd; margin: 0; }
.tocv { height: 224px; }
.mapthumb { height: 540px; }
.tbv { height: 477px; }
.hbar { height: 16px; flex: none; display: flex; align-items: center; background: #f0f0f0; }
.arrh { width: 6px; height: 9px; margin: 0 6px; flex: none; }
.htrack { flex: 1; min-width: 0; display: flex; align-items: stretch; height: 16px; }
.thumbh { background: #cdcdcd; height: 16px; }
.toch { width: 209px; }
.tbh { width: 273px; }
.mapth { width: 604px; }
.row { height: 20px; display: flex; align-items: center; white-space: nowrap; position: relative; }
.rootrow { padding-left: 9px; }
.rootrow b { margin: -2px 0 0 5px; font-size: 12px; }
.e1 { margin-right: 5px; }
.rowic { width: 16px; height: 16px; flex: none; }
.exp { width: 9px; height: 9px; box-sizing: border-box; border: 1px solid #8a8f94; background: linear-gradient(#fff, #ddd); position: relative; flex: none; }
.exp::before { content: ""; position: absolute; left: 1px; right: 1px; top: 3px; height: 1px; background: #222; }
.exp.plus::after { content: ""; position: absolute; top: 1px; bottom: 1px; left: 3px; width: 1px; background: #222; }
.head { padding-left: 28px; }
.cb { width: 12px; height: 12px; margin-left: 7px; }
.lbl { margin-left: 6px; padding: 0 1px; line-height: 20px; height: 20px; letter-spacing: .08px; }
.selected { background: #0078d7; color: #fff; outline: 1px dotted #e8a33c; outline-offset: -1px; width: 184px; }
.leg { padding-left: 60px; }
.leg span { margin-left: 2.500px; margin-top: -1px; letter-spacing: .37px; }
.sw { width: 15px; height: 11px; box-sizing: border-box; border: 1px solid #6e6e6e; margin-top: 2px; display: block; flex: none; }
.subhd { padding-left: 83px; }
.mapp { width: 742px; margin-left: 6px; flex: none; display: flex; flex-direction: column; border-top: 2px solid #6d6d6d; border-left: 1px solid #6d6d6d; box-sizing: border-box; }
.mapinner { flex: 1; min-height: 0; display: flex; background: #fff; }
.mapsvg { width: 724px; height: 583px; flex: none; }
.mapv { width: 15px; padding: 0 1px; }
.mapbottom { height: 17px; flex: none; background: #f0f0f0; display: flex; align-items: center; }
.mapbottom .sep { margin: 0 3.500px 0 2.500px; }
.mapbottom .arrh { margin-left: 5px; margin-right: 5px; }
.mapbottom .mb + .mb + .sep + .mb + .mb { margin-left: 1px; }
.mb { width: 17px; height: 16px; display: flex; align-items: center; justify-content: center; flex: none; }
.mb svg { width: 11px; height: 11px; }
.mb.active { background: #c3dcf2; border: 1px solid #9cc3e4; box-sizing: border-box; }
.toolbox { width: 323px; margin-left: 6px; flex: none; display: flex; flex-direction: column; padding-top: 1px; box-sizing: border-box; }
.tbframe { background: #f0f0f0; margin-top: 0; }
.tbrow { letter-spacing: .15px; }
.tbrow span.hl { background: #f0f0f0; padding: 0 2px; margin-left: -2px; line-height: 20px; }
.root { padding-left: 4px; }
.root span { margin-left: 4px; }
.lv0 { padding-left: 7px; }
.lv0 .rowic { margin-left: 6px; margin-right: 5px; }
.lv1 { padding-left: 26px; }
.lv1 .rowic { margin-left: 6px; margin-right: 5px; }
.lv2 { padding-left: 61px; }
.lv2 .rowic { margin-right: 4px; }
.dock { flex: 1; display: flex; flex-direction: column; padding-left: 2px; padding-top: 2px; }
.dtab { width: 20px; box-sizing: border-box; border: 1px solid #b5b5b5; border-right: none; border-radius: 4px 0 0 4px; background: #f0f0f0; display: flex; flex-direction: column; align-items: center; padding-top: 2px; color: #777; }
.dtab svg { width: 15px; height: 15px; }
.dtab span { writing-mode: vertical-rl; text-orientation: sideways; font-size: 12px; margin-top: 2px; letter-spacing: 0; line-height: 14px; }
.t1 { height: 52px; }
.t2 { height: 52px; }
.t3 { height: 77px; margin-top: 14px; }
.status { height: 23px; flex: none; background: #eeeeee; padding-left: 1084px; line-height: 26px; white-space: pre; font-size: 12px; }
.taskbar { height: 8px; flex: none; display: flex; position: relative; overflow: hidden; }
.tk { display: block; height: 8px; }
.a { width: 246px; background: #dcdcdc; }
.b { width: 48px; background: #f0f0f0; }
.c { width: 49px; background: #f7b47f; }
.d { flex: 1; background: #d2d2d2; }
.clock { position: absolute; left: 1262px; top: 1px; font-size: 12px; line-height: 14px; }
.popup { position: absolute; left: 1091px; top: 678px; width: 275px; height: 50px; box-sizing: border-box; border: 1px solid #3a62b0; background: rgba(165, 195, 240, .72); }
.ptop { height: 7px; background: #3c66b8; display: flex; justify-content: center; align-items: center; gap: 2px; }
.ptop i { width: 2px; height: 2px; background: #e8eefa; display: block; }
.pbody { position: relative; height: 42px; display: flex; align-items: flex-start; }
.pscroll { width: 30px; height: 32px; position: absolute; left: 8px; top: 4px; opacity: .9; }
.pcheck { width: 14px; height: 14px; position: absolute; left: 46px; top: 8px; }
.pbody b { position: absolute; left: 64px; top: 6px; font-size: 12.500px; line-height: 16px; color: #222; }
.pclose { width: 14px; height: 14px; position: absolute; left: 254px; top: 4px; }
.wm { position: absolute; left: 24px; top: 28px; font: 15.800px/18px "Liberation Sans", sans-serif; color: rgba(255, 255, 255, .8); text-shadow: 0 0 1px rgba(70, 90, 130, .7); white-space: nowrap; }
</style>
